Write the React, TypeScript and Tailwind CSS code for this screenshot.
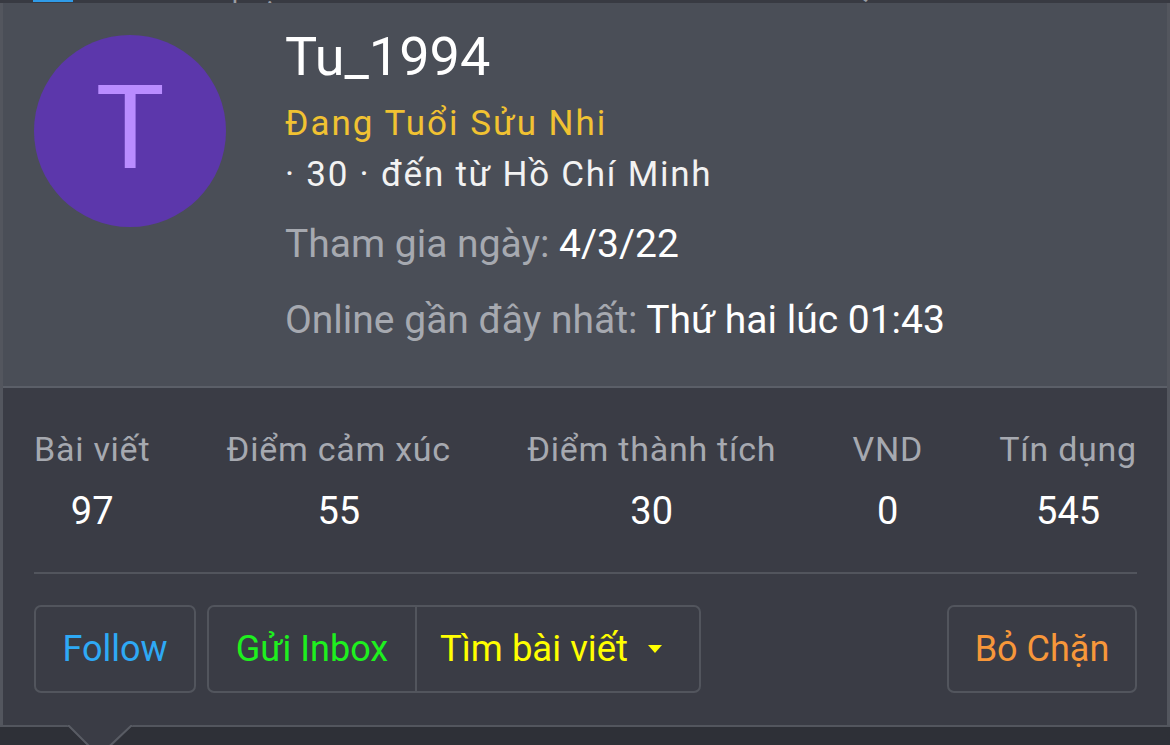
import React from "react";

const stats = [
  { label: "Bài viết", value: "97" },
  { label: "Điểm cảm xúc", value: "55" },
  { label: "Điểm thành tích", value: "30" },
  { label: "VND", value: "0" },
  { label: "Tín dụng", value: "545" },
];

export default function App() {
  return (
    <div className="relative w-[1170px] h-[745px] overflow-hidden bg-[#2e3037] font-['Roboto',sans-serif]">
      {/* underlying page strip */}
      <div className="h-[3px] bg-[#383a42] overflow-hidden relative">
        <div className="absolute left-[33px] top-[-10px] w-[40px] h-[12px] border-2 border-[#2f9be8]" />
        <div className="absolute left-[125px] top-[-24px] text-[28px] text-[#9a9da4] leading-[28px]">● Báo vi phạm</div>
        <div className="absolute left-[648px] top-[-24px] text-[28px] text-[#9a9da4] leading-[28px]">157 Like</div>
        <div className="absolute left-[850px] top-[-24px] text-[28px] text-[#9a9da4] leading-[28px]">Quote</div>
        <div className="absolute left-[1063px] top-[-24px] text-[28px] text-[#9a9da4] leading-[28px]">Trả lời</div>
      </div>

      {/* card */}
      <div className="w-[1170px] border-x-[3px] border-b-2 border-[#53565e]">
        {/* top */}
        <div className="flex bg-[#4a4e57] border-b-2 border-[#5b5f68] h-[385px]">
          <div className="ml-[31px] mt-[32px] w-[192px] h-[192px] rounded-full bg-[#5c37ab] flex items-center justify-center shrink-0">
            <span className="text-[116px] leading-none text-[#b98cff] mt-[-6px]">T</span>
          </div>
          <div className="ml-[59px] pt-[24px] flex flex-col">
            <div className="text-[54px] leading-[60px] text-white">Tu_1994</div>
            <div className="text-[35px] leading-[40px] tracking-[2px] text-[#f1c232] mt-[17px]">Đang Tuổi Sửu Nhi</div>
            <div className="text-[35px] leading-[40px] tracking-[1.75px] text-[#f2f2f2] mt-[11px]">· 30 · đến từ Hồ Chí Minh</div>
            <div className="text-[39px] leading-[40px] mt-[29px] whitespace-nowrap">
              <span className="text-[#a6a9b0]">Tham gia ngày: </span>
              <span className="text-white">4/3/22</span>
            </div>
            <div className="text-[39px] leading-[40px] mt-[36px] whitespace-nowrap">
              <span className="text-[#a6a9b0]">Online gần đây nhất: </span>
              <span className="text-white">Thứ hai lúc 01:43</span>
            </div>
          </div>
        </div>

        {/* bottom */}
        <div className="bg-[#3a3c45] pl-[31px] pr-[30px] h-[337px]">
          <div className="flex justify-between pt-[41px]">
            {stats.map((s) => (
              <div key={s.label} className="flex flex-col items-center">
                <div className="text-[34px] leading-[40px] tracking-[0.75px] text-[#a6a9b0] whitespace-nowrap">{s.label}</div>
                <div className="text-[38px] leading-[40px] text-white mt-[22px]">{s.value}</div>
              </div>
            ))}
          </div>
          <div className="h-[2px] bg-[#52555d] mt-[41px]" />
          <div className="flex items-center mt-[31px]">
            <button className="h-[88px] w-[162px] rounded-[7px] border-2 border-[#52555d] text-[36px] text-[#2ea9f5]">
              Follow
            </button>
            <div className="ml-[11px] h-[88px] flex rounded-[7px] border-2 border-[#52555d]">
              <button className="w-[208px] h-full text-[36px] text-[#1ef01e] border-r-2 border-[#52555d]">Gửi Inbox</button>
              <button className="w-[282px] h-full text-[36.5px] text-[#ffff00] flex items-center justify-start pl-[23px] gap-[20px]">
                <span>Tìm bài viết</span>
                <svg width="14" height="9" viewBox="0 0 14 9"><polygon points="0,0 14,0 7,8" fill="#ffff00" /></svg>
              </button>
            </div>
            <div className="flex-1" />
            <button className="h-[88px] w-[190px] rounded-[7px] border-2 border-[#52555d] text-[36px] text-[#f7973a]">
              Bỏ Chặn
            </button>
          </div>
        </div>
      </div>

      {/* arrow */}
      <svg className="absolute left-[66px] top-[724px]" width="68" height="40" viewBox="0 0 68 40">
        <polygon points="0,0 68,0 34,34" fill="#3a3c45" />
        <polyline points="2,1 33,32 66,1" fill="none" stroke="#595c64" strokeWidth="2" />
        <rect x="0" y="0" width="68" height="1" fill="#3a3c45" />
      </svg>
    </div>
  );
}
